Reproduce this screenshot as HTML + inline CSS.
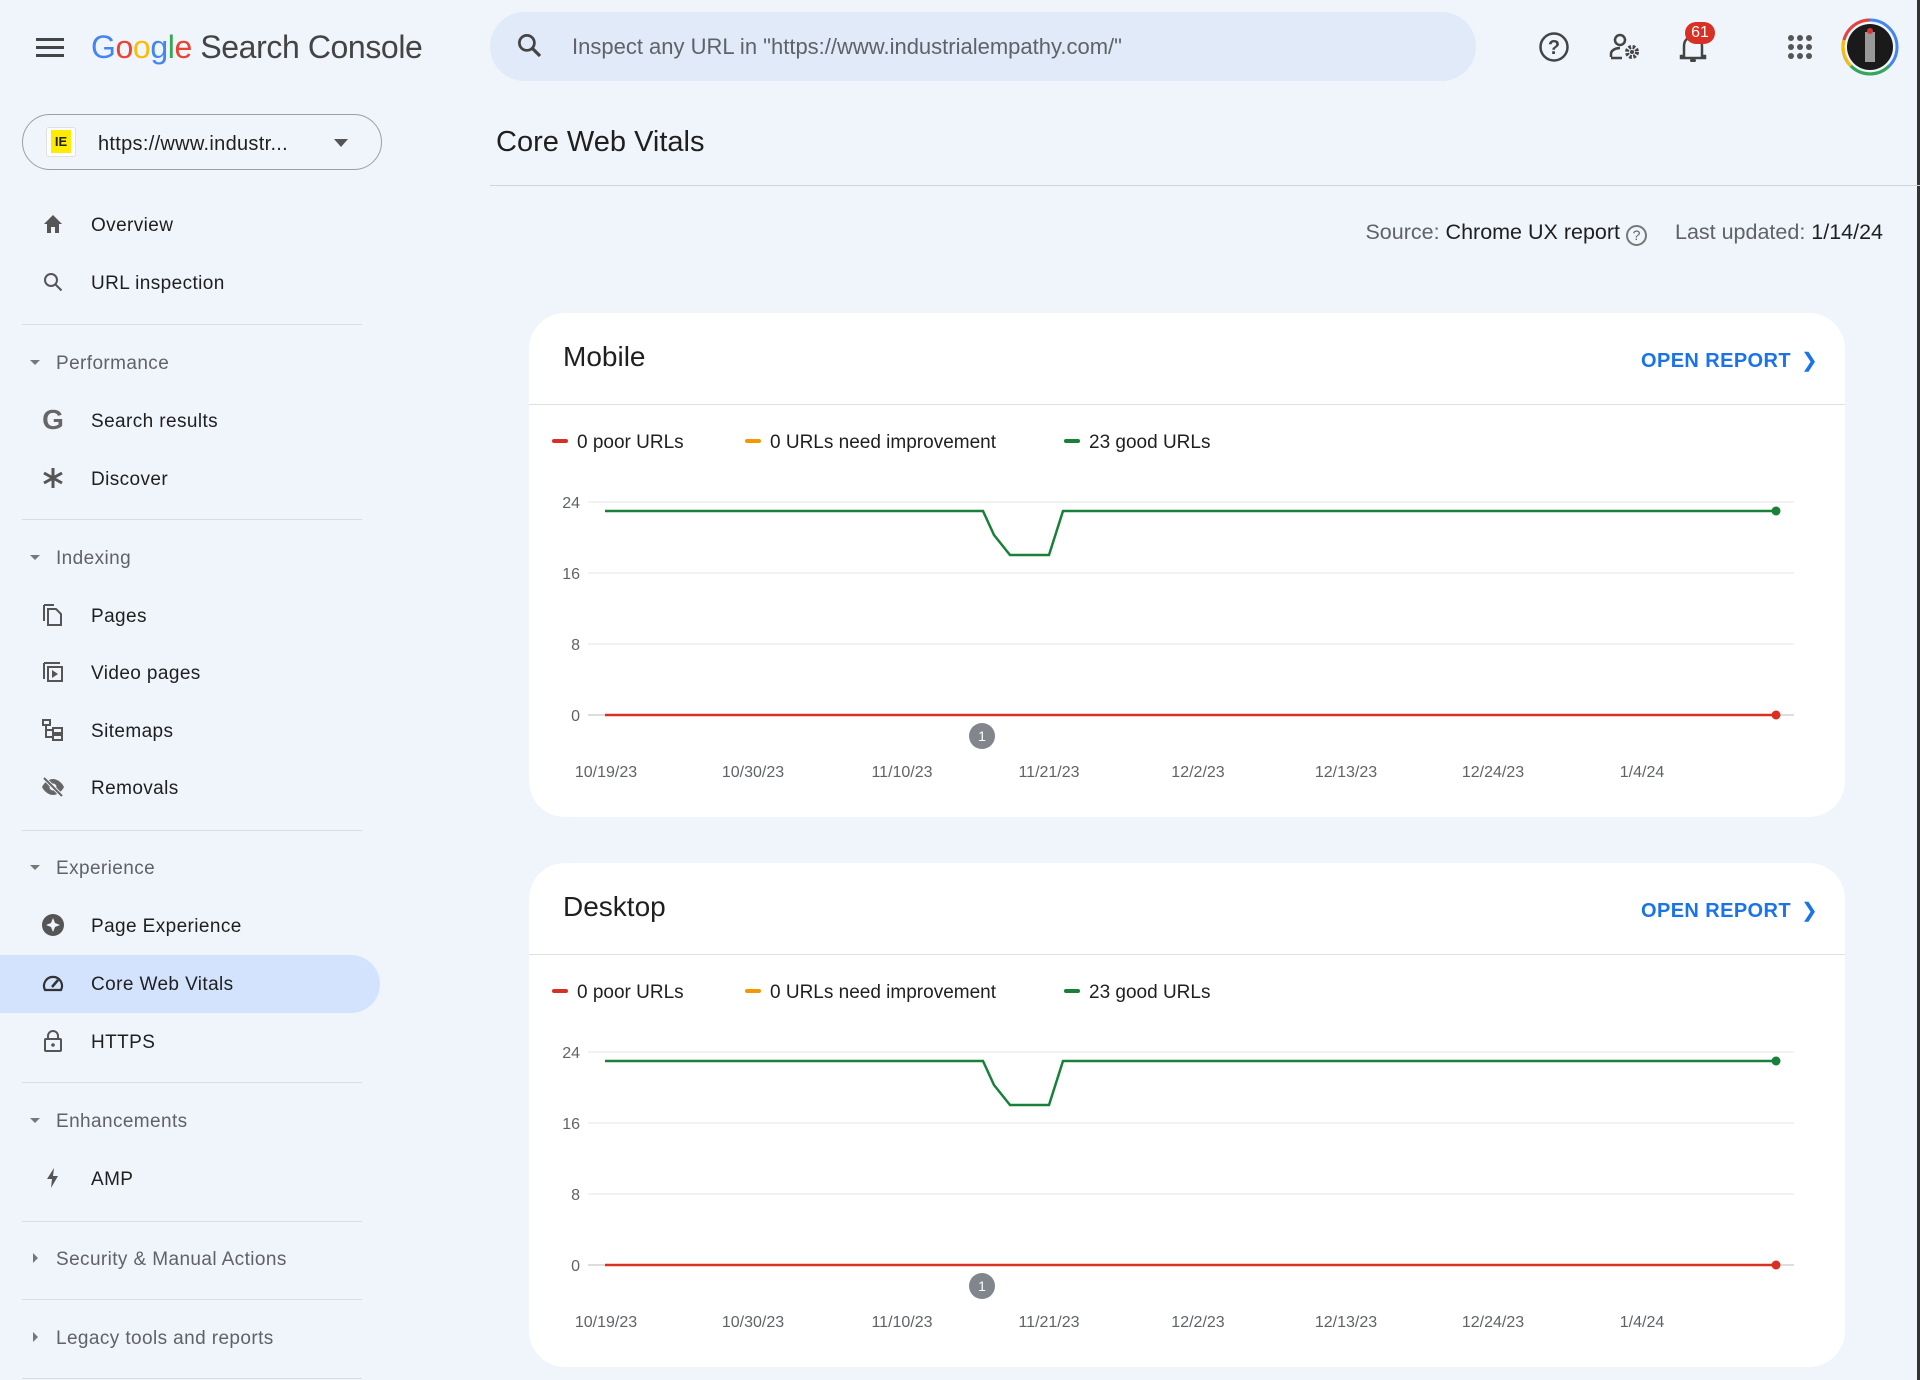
<!DOCTYPE html>
<html><head><meta charset="utf-8"><style>
*{box-sizing:border-box;margin:0;padding:0}
body{width:1920px;height:1380px;background:#f0f4fb;font-family:"Liberation Sans",sans-serif;position:relative;overflow:hidden;color:#1f1f1f}
.abs{position:absolute}
.nav{position:absolute;left:91px;font-size:19px;letter-spacing:.4px;color:#1f1f1f;transform:translateY(-42%)}
.sec{position:absolute;left:56px;font-size:19px;letter-spacing:.4px;color:#5f6368;transform:translateY(-42%)}
.tri{position:absolute;left:30px;width:0;height:0;border-left:5px solid transparent;border-right:5px solid transparent;border-top:5px solid #777}
.tri.r{border-top:5px solid transparent;border-bottom:5px solid transparent;border-left:5px solid #777;border-right:0;left:33px}
.div{position:absolute;left:22px;width:340px;height:1px;background:#dadce0}
.ic{position:absolute;left:41px;width:24px;height:24px;transform:translateY(-50%)}
.card{position:absolute;left:529px;width:1316px;height:504px;background:#fff;border-radius:36px;overflow:hidden}
.card h2{position:absolute;left:34px;top:28px;font-size:28px;font-weight:normal;color:#1f1f1f}
.open{position:absolute;left:1112px;top:35px;font-size:20px;color:#1a73e8;letter-spacing:.4px;font-weight:bold;white-space:nowrap}
.open span{font-weight:normal;margin-left:10px}
.hd{position:absolute;left:0;top:91px;width:100%;height:1px;background:#e0e0e0}
.lg{position:absolute;top:119px;font-size:19px;color:#1f1f1f}
.lg i{display:inline-block;width:16px;height:4px;border-radius:2px;vertical-align:middle;margin-right:9px;margin-top:-3px}
</style></head><body>
<svg class="abs" style="left:36px;top:36px" width="28" height="22"><rect y="2" width="28" height="3" fill="#444"/><rect y="10" width="28" height="3" fill="#444"/><rect y="18" width="28" height="3" fill="#444"/></svg>
<div class="abs" style="left:91px;top:29px;font-size:32px;white-space:nowrap;letter-spacing:-.4px"><span style="color:#4285f4">G</span><span style="color:#ea4335">o</span><span style="color:#fbbc05">o</span><span style="color:#4285f4">g</span><span style="color:#34a853">l</span><span style="color:#ea4335">e</span> <span style="color:#444">Search Console</span></div>
<div class="abs" style="left:490px;top:12px;width:986px;height:69px;border-radius:35px;background:#e1eaf8"></div>
<svg class="abs" style="left:515px;top:31px" width="30" height="30" viewBox="0 0 24 24"><circle cx="9.5" cy="9.5" r="6" fill="none" stroke="#444" stroke-width="2.2"/><path d="M14 14l6 6" stroke="#444" stroke-width="2.6"/></svg>
<div class="abs" style="left:572px;top:34px;font-size:22px;color:#5f6368">Inspect any URL in "https://www.industrialempathy.com/"</div>
<svg class="abs" style="left:1538px;top:31px" width="32" height="32" viewBox="0 0 32 32"><circle cx="16" cy="16" r="13.5" fill="none" stroke="#444" stroke-width="2.5"/><text x="16" y="23" font-size="20" text-anchor="middle" fill="#444" font-family="Liberation Sans" font-weight="bold">?</text></svg>
<svg class="abs" style="left:1608px;top:32px" width="34" height="30" viewBox="0 0 34 30"><circle cx="12" cy="8" r="5" fill="none" stroke="#444" stroke-width="2.5"/><path d="M3 25v-3c0-4 5-6 9-6" fill="none" stroke="#444" stroke-width="2.5"/><path d="M3 26h11" stroke="#444" stroke-width="2.5"/><circle cx="24" cy="20" r="5" fill="none" stroke="#444" stroke-width="4" stroke-dasharray="2.5 1.5"/><circle cx="24" cy="20" r="2" fill="#444"/></svg>
<svg class="abs" style="left:1679px;top:32px" width="28" height="32" viewBox="0 0 28 32"><path d="M5 24V14c0-6 4-9 9-9s9 3 9 9v10h3v2H2v-2z" fill="none" stroke="#444" stroke-width="2.5"/><rect x="11" y="27" width="6" height="3" rx="1.5" fill="#444"/></svg>
<div class="abs" style="left:1685px;top:22px;width:30px;height:22px;border-radius:11px;background:#d93025;color:#fff;font-size:16px;text-align:center;line-height:22px">61</div>
<svg class="abs" style="left:1788px;top:35px" width="24" height="24"><g fill="#555"><circle cx="3" cy="3" r="3"/><circle cx="12" cy="3" r="3"/><circle cx="21" cy="3" r="3"/><circle cx="3" cy="12" r="3"/><circle cx="12" cy="12" r="3"/><circle cx="21" cy="12" r="3"/><circle cx="3" cy="21" r="3"/><circle cx="12" cy="21" r="3"/><circle cx="21" cy="21" r="3"/></g></svg>
<svg class="abs" style="left:1841px;top:18px" width="58" height="58" viewBox="0 0 58 58"><circle cx="29" cy="29" r="27" fill="none" stroke="#4285f4" stroke-width="3"/><path d="M29 2A27 27 0 0 0 3 22" fill="none" stroke="#ea4335" stroke-width="3"/><path d="M3 22A27 27 0 0 0 10 48" fill="none" stroke="#fbbc05" stroke-width="3"/><path d="M10 48A27 27 0 0 0 48 48" fill="none" stroke="#34a853" stroke-width="3"/><circle cx="29" cy="29" r="23" fill="#1a1a1a"/><rect x="24" y="14" width="10" height="30" fill="#999"/><circle cx="29" cy="13" r="3" fill="#d33"/></svg>
<div class="abs" style="left:1917px;top:0;width:3px;height:1380px;background:#333"></div>

<div class="abs" style="left:22px;top:114px;width:360px;height:56px;border:1px solid #9aa0a6;border-radius:28px"></div>
<div class="abs" style="left:46px;top:127px;width:30px;height:30px;background:#fff;border:1px solid #e0e0e0;border-radius:3px"></div>
<div class="abs" style="left:51px;top:130px;width:20px;height:23px;background:#ffeb00;font-size:13px;font-weight:bold;text-align:center;line-height:23px">IE</div>
<div class="abs" style="left:98px;top:133px;font-size:20px;letter-spacing:.3px">https://www.industr...</div>
<div class="abs" style="left:334px;top:139px;border-left:7px solid transparent;border-right:7px solid transparent;border-top:8px solid #555"></div>

<div class="abs" style="left:0;top:955px;width:380px;height:58px;background:#d3e3fd;border-radius:0 29px 29px 0"></div>
<svg class="ic" style="top:224px" viewBox="0 0 24 24"><path d="M12 3l9 9h-3v9h-4v-6h-4v6H6v-9H3z" fill="#555"/></svg>
<div class="nav" style="top:224px">Overview</div>
<svg class="ic" style="top:282px" viewBox="0 0 24 24"><circle cx="10" cy="10" r="6" fill="none" stroke="#555" stroke-width="2"/><path d="M14.5 14.5l6 6" stroke="#555" stroke-width="2"/></svg>
<div class="nav" style="top:282px">URL inspection</div>
<div class="div" style="top:324px"></div>
<div class="tri" style="top:360px"></div><div class="sec" style="top:362px">Performance</div>
<div class="ic" style="top:420px;font-size:28px;font-weight:bold;color:#666;line-height:24px;text-align:center">G</div>
<div class="nav" style="top:420px">Search results</div>
<svg class="ic" style="top:478px" viewBox="0 0 24 24"><path d="M12 2v20M3 7l18 10M21 7L3 17" stroke="#555" stroke-width="3"/></svg>
<div class="nav" style="top:478px">Discover</div>
<div class="div" style="top:519px"></div>
<div class="tri" style="top:555px"></div><div class="sec" style="top:557px">Indexing</div>
<svg class="ic" style="top:615px" viewBox="0 0 24 24"><path d="M3 2h10M3 2v16" stroke="#555" stroke-width="2" fill="none"/><path d="M7 6h8l5 5v11H7z" fill="none" stroke="#555" stroke-width="2"/></svg>
<div class="nav" style="top:615px">Pages</div>
<svg class="ic" style="top:672px" viewBox="0 0 24 24"><path d="M3 3v16M3 3h16" stroke="#555" stroke-width="2" fill="none"/><rect x="7" y="7" width="14" height="14" fill="none" stroke="#555" stroke-width="2"/><path d="M11 10v8l6-4z" fill="#555"/></svg>
<div class="nav" style="top:672px">Video pages</div>
<svg class="ic" style="top:730px" viewBox="0 0 24 24"><rect x="2" y="2" width="7" height="5" fill="none" stroke="#555" stroke-width="2"/><rect x="12" y="10" width="9" height="5" fill="none" stroke="#555" stroke-width="2"/><rect x="12" y="17" width="9" height="5" fill="none" stroke="#555" stroke-width="2"/><path d="M5 7v12h7M5 12h7" stroke="#555" stroke-width="2" fill="none"/></svg>
<div class="nav" style="top:730px">Sitemaps</div>
<svg class="ic" style="top:787px" viewBox="0 0 24 24"><path d="M1 12c3-6 8-8 11-8s8 2 11 8c-3 6-8 8-11 8S4 18 1 12z" fill="#666"/><circle cx="12" cy="12" r="3.5" fill="#f0f4fb"/><path d="M3 3l18 18" stroke="#f0f4fb" stroke-width="4"/><path d="M3 3l18 18" stroke="#666" stroke-width="2"/></svg>
<div class="nav" style="top:787px">Removals</div>
<div class="div" style="top:830px"></div>
<div class="tri" style="top:865px"></div><div class="sec" style="top:867px">Experience</div>
<svg class="ic" style="top:925px" viewBox="0 0 24 24"><circle cx="12" cy="12" r="11" fill="#555"/><path d="M12 5l2 5 5 2-5 2-2 5-2-5-5-2 5-2z" fill="#f0f4fb"/></svg>
<div class="nav" style="top:925px">Page Experience</div>
<svg class="ic" style="top:983px" viewBox="0 0 24 24"><path d="M4 19a9 9 0 1 1 16 0z" fill="none" stroke="#333" stroke-width="2.2"/><path d="M11 16l6-7" stroke="#333" stroke-width="2.5"/></svg>
<div class="nav" style="top:983px">Core Web Vitals</div>
<svg class="ic" style="top:1041px" viewBox="0 0 24 24"><path d="M7 10V7a5 5 0 0 1 10 0v3" fill="none" stroke="#555" stroke-width="2"/><rect x="4" y="10" width="16" height="12" rx="1" fill="none" stroke="#555" stroke-width="2"/><circle cx="12" cy="16" r="1.8" fill="#555"/></svg>
<div class="nav" style="top:1041px">HTTPS</div>
<div class="div" style="top:1082px"></div>
<div class="tri" style="top:1118px"></div><div class="sec" style="top:1120px">Enhancements</div>
<svg class="ic" style="top:1178px" viewBox="0 0 24 24"><path d="M13 2L6 13h5l-1 9 7-12h-5z" fill="#555"/></svg>
<div class="nav" style="top:1178px">AMP</div>
<div class="div" style="top:1221px"></div>
<div class="tri r" style="top:1253px"></div><div class="sec" style="top:1258px">Security &amp; Manual Actions</div>
<div class="div" style="top:1299px"></div>
<div class="tri r" style="top:1332px"></div><div class="sec" style="top:1337px">Legacy tools and reports</div>
<div class="div" style="top:1378px"></div>

<div class="abs" style="left:496px;top:126px;font-size:29px;color:#1f1f1f">Core Web Vitals</div>
<div class="abs" style="left:490px;top:185px;width:1430px;height:1px;background:#d0d4da"></div>
<div class="abs" style="right:37px;top:220px;font-size:21.5px;color:#5f6368;white-space:nowrap">Source: <span style="color:#1f1f1f">Chrome UX report</span> <span style="display:inline-block;width:21px;height:21px;border:2px solid #777;border-radius:50%;font-size:14px;text-align:center;line-height:17px;vertical-align:-1px">?</span><span style="display:inline-block;width:28px"></span>Last updated: <span style="color:#1f1f1f">1/14/24</span></div>

<div class="card" style="top:313px">
<h2>Mobile</h2><div class="open">OPEN REPORT<span>&#x276F;</span></div><div class="hd"></div>
<div class="lg" style="left:23px"><i style="background:#d93025"></i>0 poor URLs</div>
<div class="lg" style="left:216px"><i style="background:#f29900"></i>0 URLs need improvement</div>
<div class="lg" style="left:535px"><i style="background:#188038"></i>23 good URLs</div>
<svg class="abs" style="left:0;top:0" width="1316" height="504">
<g stroke="#e6e6e6" stroke-width="1"><line x1="59" y1="189" x2="1265" y2="189"/><line x1="59" y1="260" x2="1265" y2="260"/><line x1="59" y1="331" x2="1265" y2="331"/><line x1="59" y1="402" x2="1265" y2="402" stroke="#bbb"/></g>
<g font-family="Liberation Sans" font-size="16" fill="#5f6368" text-anchor="end"><text x="51" y="195">24</text><text x="51" y="266">16</text><text x="51" y="337">8</text><text x="51" y="408">0</text></g>
<polyline points="76,198 454,198 465,222 481,242 520,242 534,198 1247,198" fill="none" stroke="#188038" stroke-width="2.5"/>
<line x1="76" y1="402" x2="1247" y2="402" stroke="#d93025" stroke-width="2.5"/>
<circle cx="1247" cy="198" r="4.5" fill="#188038"/><circle cx="1247" cy="402" r="4.5" fill="#d93025"/>
<circle cx="453" cy="423" r="13" fill="#80868b"/><text x="453" y="428" font-family="Liberation Sans" font-size="14" fill="#fff" text-anchor="middle">1</text>
<g font-family="Liberation Sans" font-size="16" fill="#5f6368" text-anchor="middle"><text x="77" y="464">10/19/23</text><text x="224" y="464">10/30/23</text><text x="373" y="464">11/10/23</text><text x="520" y="464">11/21/23</text><text x="669" y="464">12/2/23</text><text x="817" y="464">12/13/23</text><text x="964" y="464">12/24/23</text><text x="1113" y="464">1/4/24</text></g>
</svg>
</div>
<div class="card" style="top:863px">
<h2>Desktop</h2><div class="open">OPEN REPORT<span>&#x276F;</span></div><div class="hd"></div>
<div class="lg" style="left:23px"><i style="background:#d93025"></i>0 poor URLs</div>
<div class="lg" style="left:216px"><i style="background:#f29900"></i>0 URLs need improvement</div>
<div class="lg" style="left:535px"><i style="background:#188038"></i>23 good URLs</div>
<svg class="abs" style="left:0;top:0" width="1316" height="504">
<g stroke="#e6e6e6" stroke-width="1"><line x1="59" y1="189" x2="1265" y2="189"/><line x1="59" y1="260" x2="1265" y2="260"/><line x1="59" y1="331" x2="1265" y2="331"/><line x1="59" y1="402" x2="1265" y2="402" stroke="#bbb"/></g>
<g font-family="Liberation Sans" font-size="16" fill="#5f6368" text-anchor="end"><text x="51" y="195">24</text><text x="51" y="266">16</text><text x="51" y="337">8</text><text x="51" y="408">0</text></g>
<polyline points="76,198 454,198 465,222 481,242 520,242 534,198 1247,198" fill="none" stroke="#188038" stroke-width="2.5"/>
<line x1="76" y1="402" x2="1247" y2="402" stroke="#d93025" stroke-width="2.5"/>
<circle cx="1247" cy="198" r="4.5" fill="#188038"/><circle cx="1247" cy="402" r="4.5" fill="#d93025"/>
<circle cx="453" cy="423" r="13" fill="#80868b"/><text x="453" y="428" font-family="Liberation Sans" font-size="14" fill="#fff" text-anchor="middle">1</text>
<g font-family="Liberation Sans" font-size="16" fill="#5f6368" text-anchor="middle"><text x="77" y="464">10/19/23</text><text x="224" y="464">10/30/23</text><text x="373" y="464">11/10/23</text><text x="520" y="464">11/21/23</text><text x="669" y="464">12/2/23</text><text x="817" y="464">12/13/23</text><text x="964" y="464">12/24/23</text><text x="1113" y="464">1/4/24</text></g>
</svg>
</div>
</body></html>
